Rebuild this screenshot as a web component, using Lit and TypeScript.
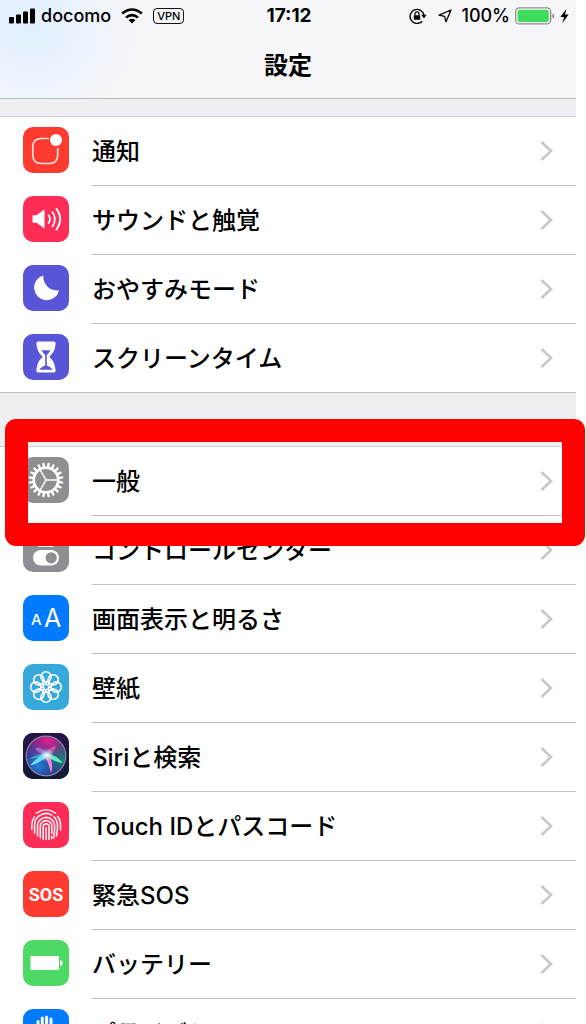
import { LitElement, html, css, svg, nothing, TemplateResult } from "lit";
import { customElement, property } from "lit/decorators.js";

const range = (n: number) => Array.from({ length: n }, (_, i) => i);

const glyphs: Record<string, TemplateResult> = {
  notice: svg`
    <path d="M26 11.5H18.5Q9.8 11.5 9.8 20V28Q9.8 36.5 18.5 36.5H26Q34.7 36.5 34.7 28V21" fill="none" stroke="#ffe3df" stroke-width="1.7"/>
    <circle cx="33" cy="13" r="6" fill="#fff"/>`,
  sound: svg`
    <path d="M9.5 19.3H13.5L21.5 13.6V32.4L13.5 26.7H9.5Z" fill="#fff"/>
    <g fill="none" stroke="#fff" stroke-width="1.8" stroke-linecap="round">
      <path d="M25.6 19.2Q28.4 23 25.6 27"/>
      <path d="M29.4 15.9Q34.4 23 29.4 30.4"/>
      <path d="M33.4 12.8Q41 23 33.4 33.8"/>
    </g>`,
  moon: svg`<path d="M20.4 10.4A12.6 12.6 0 1 0 36 25.4A13.8 13.8 0 0 1 20.4 10.4Z" fill="#fff"/>`,
  hourglass: svg`
    <path d="M15.4 7.5H30.6Q33 7.5 32.6 10C31.6 17.5 29.6 19.6 26.2 22.8C29.8 26 31.8 29.5 32.6 36Q32.9 38.5 30.6 38.5H15.4Q13.1 38.5 13.4 36C14.2 29.5 16.2 26 19.8 22.8C16.4 19.6 14.4 17.5 13.4 10Q13 7.5 15.4 7.5Z" fill="#fff"/>
    <path d="M18.5 16.3H27.5Q25.8 19.3 23.8 21V31.5Q28 33 29.8 35.8H16.2Q18 33 22.2 31.5V21Q20.2 19.3 18.5 16.3Z" fill="#5856d6"/>`,
  gear: svg`
    ${range(20).map((i) => svg`<path d="M21.6 10.5L22 5.6H24L24.4 10.5Z" fill="#fff" transform="rotate(${i * 18 + 9} 23 23)"/>`)}
    <circle cx="23" cy="23" r="12.2" fill="none" stroke="#fff" stroke-width="2.6"/>
    <path d="M23 23H35M23 23L17 12.6M23 23L17 33.4" stroke="#fff" stroke-width="1.5"/>`,
  control: svg`
    <rect x="11" y="7.5" width="24" height="12.6" rx="6.3" fill="none" stroke="#fff" stroke-width="1.7"/>
    <circle cx="17.3" cy="13.8" r="4.5" fill="#fff"/>
    <rect x="10" y="24" width="26" height="15.6" rx="7.8" fill="#fff"/>
    <circle cx="28.2" cy="31.8" r="5.6" fill="#8e8e93"/>`,
  display: svg`
    <g fill="#fff" font-family="Inter, sans-serif">
      <text x="8" y="30" font-size="15" font-weight="500">A</text>
      <text x="21" y="32" font-size="25" font-weight="400">A</text>
    </g>`,
  flower: svg`
    <g fill="none" stroke="#fff" stroke-width="1.6">
      ${range(8).map((i) => svg`<circle cx="23" cy="12.8" r="5.1" transform="rotate(${i * 45} 23 23)"/>`)}
      ${range(8).map((i) => svg`<path d="M23 20L20.6 15.5M23 20L25.4 15.5" stroke-width="1.2" transform="rotate(${i * 45} 23 23)"/>`)}
      <circle cx="23" cy="23" r="2.6" stroke-width="1.2"/>
    </g>`,
  siri: svg`
    <defs>
      <radialGradient id="pink" cx="0.55" cy="0.1" r="0.65"><stop offset="0" stop-color="#e0218f"/><stop offset="0.6" stop-color="#a3258c" stop-opacity="0.7"/><stop offset="1" stop-color="#a3258c" stop-opacity="0"/></radialGradient>
      <radialGradient id="teal" cx="0.95" cy="0.6" r="0.5"><stop offset="0" stop-color="#17877c"/><stop offset="1" stop-color="#17877c" stop-opacity="0"/></radialGradient>
      <radialGradient id="blue" cx="0.3" cy="0.75" r="0.6"><stop offset="0" stop-color="#2480d8"/><stop offset="1" stop-color="#2466c8" stop-opacity="0"/></radialGradient>
      <radialGradient id="glow"><stop offset="0" stop-color="#fff"/><stop offset="1" stop-color="#bdeaff" stop-opacity="0"/></radialGradient>
      <linearGradient id="night" x1="0" y1="0" x2="0" y2="1"><stop offset="0" stop-color="#281447"/><stop offset="1" stop-color="#101a35"/></linearGradient>
    </defs>
    <rect width="46" height="46" rx="10" fill="url(#night)"/>
    <circle cx="23" cy="23" r="19.5" fill="#32206f"/>
    <circle cx="23" cy="23" r="19.5" fill="url(#pink)"/>
    <circle cx="23" cy="23" r="19.5" fill="url(#teal)"/>
    <circle cx="23" cy="23" r="19.5" fill="url(#blue)"/>
    <path d="M24 22Q20 13 12 15Q15 21 24 22Z" fill="#d68bea" opacity="0.55"/>
    <path d="M24 22Q24 14 33 13Q32 20 24 22Z" fill="#ef64ae" opacity="0.6"/>
    <path d="M24 21Q16 20 6 26Q16 25 24 23Z" fill="#62d7ef" opacity="0.6"/>
    <path d="M24 20Q15 23 7.5 32Q11 33 25 23.5Z" fill="#66e4f5"/>
    <path d="M23 20Q33 22 40 30Q34 30 23 23.5Z" fill="#5ff0bc"/>
    <path d="M22 23Q26 31 28 40Q31 32 26 22Z" fill="#f287d3"/>
    <circle cx="24" cy="22" r="7" fill="url(#glow)"/>
    <circle cx="23" cy="23" r="19.8" fill="none" stroke="#8d83aa" stroke-width="1.2"/>`,
  finger: svg`
    <g fill="none" stroke="#fff" stroke-width="1.6" stroke-linecap="round" opacity="0.92">
      <path d="M13.5 11.2Q23 4.4 32.5 11.2"/>
      <path d="M8.8 27.5V23A14.2 13.3 0 0 1 11.6 14.8"/>
      <path d="M34.6 14.4A14.2 13.3 0 0 1 37.5 23V28"/>
      <path d="M11.6 31V23A11.4 11.4 0 0 1 28.6 13"/>
      <path d="M31 14.8Q34.5 18.5 34.5 24Q34.5 29.5 33.4 34"/>
      <path d="M14.5 34V24A8.6 8.6 0 0 1 31.7 24Q31.8 31 30.4 36"/>
      <path d="M17.3 36V24.4A5.8 5.8 0 0 1 28.9 24.4V31.5"/>
      <path d="M20.2 37.2V24.8A2.9 2.9 0 0 1 26 24.8V37.5"/>
      <path d="M23.1 25.5V37.8M28.7 34.5V36.6"/>
    </g>`,
  sos: svg`<text x="23" y="30" text-anchor="middle" fill="#fff" font-family="Roboto, sans-serif" font-size="18" font-weight="700">SOS</text>`,
  battery: svg`
    <rect x="7.5" y="16" width="28.5" height="14" rx="1.2" fill="#fff"/>
    <path d="M37 20Q39.8 20.6 39.8 23T37 26Z" fill="#fff"/>`,
  hand: svg`
    <g fill="none" stroke="#fff" stroke-width="3" stroke-linecap="round">
      <path d="M15 24V12.5M19.3 22V9M23.6 22V8M28 23V10"/>
      <path d="M13.5 24H29.5V30L34 23"/>
    </g>
    <path d="M13.5 21H29.5V34Q22 40 13.5 33Z" fill="#fff"/>`,
};

interface Item {
  icon: string;
  color: string;
  label: string;
  marked?: boolean;
}

const groups: Item[][] = [
  [
    { icon: "notice", color: "#ff3b30", label: "通知" },
    { icon: "sound", color: "#ff2d55", label: "サウンドと触覚" },
    { icon: "moon", color: "#5856d6", label: "おやすみモード" },
    { icon: "hourglass", color: "#5856d6", label: "スクリーンタイム" },
  ],
  [
    { icon: "gear", color: "#8e8e93", label: "一般", marked: true },
    { icon: "control", color: "#8e8e93", label: "コントロールセンター" },
    { icon: "display", color: "#007aff", label: "画面表示と明るさ" },
    { icon: "flower", color: "#36a8dc", label: "壁紙" },
    { icon: "siri", color: "#16162f", label: "Siriと検索" },
    { icon: "finger", color: "#ff2d55", label: "Touch IDとパスコード" },
    { icon: "sos", color: "#ff3b30", label: "緊急SOS" },
    { icon: "battery", color: "#4cd964", label: "バッテリー" },
    { icon: "hand", color: "#007aff", label: "プライバシー" },
  ],
];

@customElement("settings-row")
class SettingsRow extends LitElement {
  @property({ attribute: false }) item!: Item;

  static styles = css`
    :host {
      display: block;
      position: relative;
    }
    .row {
      display: flex;
      gap: 23px;
      padding-left: 23px;
      color: #000;
      text-decoration: none;
    }
    .icon {
      flex: none;
      width: 46px;
      height: 46px;
      margin-top: 10px;
    }
    .body {
      flex: 1;
      display: flex;
      align-items: center;
      justify-content: space-between;
      min-height: 68px;
      padding-right: 23px;
      border-bottom: 1px solid #c0bfc4;
    }
    :host([last]) .body {
      border-bottom: 0;
    }
    .label {
      padding-top: 2px;
      font-size: 24px;
      line-height: 36px;
      font-weight: 500;
      white-space: nowrap;
    }
    .chevron {
      width: 13px;
      height: 20px;
    }
    .frame {
      position: absolute;
      z-index: 1;
      inset: -28px -9px -30px 5px;
      border: 23px solid #f00;
      border-radius: 11px;
      pointer-events: none;
    }
  `;

  render() {
    const { icon, color, label, marked } = this.item;
    return html`
      <a class="row" href="#${icon}">
        <svg class="icon" viewBox="0 0 46 46" aria-hidden="true">
          <rect width="46" height="46" rx="10" fill=${color} />
          ${glyphs[icon]}
        </svg>
        <span class="body">
          <span class="label">${label}</span>
          <svg class="chevron" viewBox="0 0 13 20" aria-hidden="true">
            <path d="M1.5 1L11 10L1.5 19" fill="none" stroke="#c7c7cc" stroke-width="2.6" />
          </svg>
        </span>
      </a>
      ${marked ? html`<div class="frame"></div>` : nothing}
    `;
  }
}

@customElement("status-bar")
class StatusBar extends LitElement {
  static styles = css`
    :host {
      display: grid;
      grid-template-columns: 1fr auto 1fr;
      align-items: center;
      height: 32px;
      padding: 0 7px 0 9px;
      font-size: 18px;
      line-height: 24px;
      font-weight: 500;
    }
    .side {
      display: flex;
      align-items: center;
    }
    .left {
      gap: 6px;
    }
    .right {
      justify-content: flex-end;
      gap: 5px;
    }
    .time {
      font-size: 19px;
      font-weight: 700;
    }
    .carrier {
      margin-right: 4px;
    }
    .vpn {
      box-sizing: border-box;
      height: 16px;
      margin-left: 4px;
      padding: 0 3px;
      border: 1px solid #111;
      border-radius: 4px;
      font-size: 11px;
      line-height: 14px;
    }
    .arrow {
      margin: 0 4px 0 6px;
    }
    svg {
      flex: none;
    }
  `;

  render() {
    return html`
      <div class="side left">
        <svg width="26" height="16" viewBox="0 0 26 16" aria-hidden="true">
          <rect x="0" y="9" width="5" height="6.5" rx="1" />
          <rect x="7" y="6.5" width="5" height="9" rx="1" />
          <rect x="14" y="3.5" width="5" height="12" rx="1" />
          <rect x="21" y="0.5" width="5" height="15" rx="1" />
        </svg>
        <span class="carrier">docomo</span>
        <svg width="22" height="16" viewBox="0 0 22 16" aria-hidden="true">
          <g fill="none" stroke="#000" stroke-width="2.6">
            <path d="M1.2 5.6Q11 -2.6 20.8 5.6" />
            <path d="M5 9.6Q11 4.6 17 9.6" />
          </g>
          <path d="M7.6 12Q11 9.4 14.4 12L11 15.6Z" />
        </svg>
        <span class="vpn">VPN</span>
      </div>
      <span class="time">17:12</span>
      <div class="side right">
        <svg width="18" height="16" viewBox="0 0 18 16" aria-hidden="true">
          <path d="M13.2 13.2A7 7 0 1 1 15 7.2" fill="none" stroke="#000" stroke-width="1.4" />
          <path d="M12.2 6.8H17.6L15 10.4Z" />
          <rect x="4.8" y="7.2" width="6.4" height="4.6" rx="0.6" />
          <path d="M6 7.5V5.8A2 2 0 0 1 10 5.8V7.5" fill="none" stroke="#000" stroke-width="1.2" />
        </svg>
        <svg class="arrow" width="14" height="14" viewBox="0 0 14 14" aria-hidden="true">
          <path d="M13 1L8 12.8L6.6 7.4L1 6.2Z" fill="none" stroke="#000" stroke-width="1.3" stroke-linejoin="round" />
        </svg>
        <span>100%</span>
        <svg width="40" height="18" viewBox="0 0 40 18" aria-hidden="true">
          <rect x="0.7" y="0.9" width="35" height="16" rx="4" fill="#fff" stroke="#8b8b8b" stroke-width="1.3" />
          <rect x="2.6" y="2.8" width="31.2" height="12.2" rx="2" fill="#3fdb5d" />
          <path d="M37.4 6.4Q39.4 7 39.4 9T37.4 11.6Z" fill="#8b8b8b" />
        </svg>
        <svg width="9" height="14" viewBox="0 0 9 14" aria-hidden="true">
          <path d="M6.4 0L0.4 8H4L2.4 14L8.6 5.6H5Z" />
        </svg>
      </div>
    `;
  }
}

@customElement("app-root")
class AppRoot extends LitElement {
  static styles = css`
    :host {
      display: block;
      box-sizing: border-box;
      height: 100vh;
      padding-right: 10px;
      overflow: hidden;
      background: #fff;
      color: #000;
      font-family: Inter, "Noto Sans CJK JP", sans-serif;
    }
    .page {
      background: #efeef3;
    }
    header {
      height: 98px;
      border-bottom: 1px solid #b9b8bd;
      background: radial-gradient(circle at 32px 24px, #e0efff 0, #eaf3fd 45px, #f6f6f8 110px);
    }
    h1 {
      margin: 0;
      padding-top: 16px;
      text-align: center;
      font-size: 24px;
      line-height: 36px;
      font-weight: 700;
    }
    .group {
      background: #fff;
      border-top: 1px solid #cfced4;
    }
    .first {
      margin-top: 17px;
      border-bottom: 1px solid #c0bfc4;
    }
    .second {
      margin-top: 53px;
    }
  `;

  render() {
    return html`
      <div class="page">
        <header>
          <status-bar></status-bar>
          <h1>設定</h1>
        </header>
        ${groups.map(
          (items, g) => html`
            <nav class="group ${g === 0 ? "first" : "second"}">
              ${items.map(
                (item, i) => html`<settings-row .item=${item} ?last=${i === items.length - 1}></settings-row>`
              )}
            </nav>
          `
        )}
      </div>
    `;
  }
}
